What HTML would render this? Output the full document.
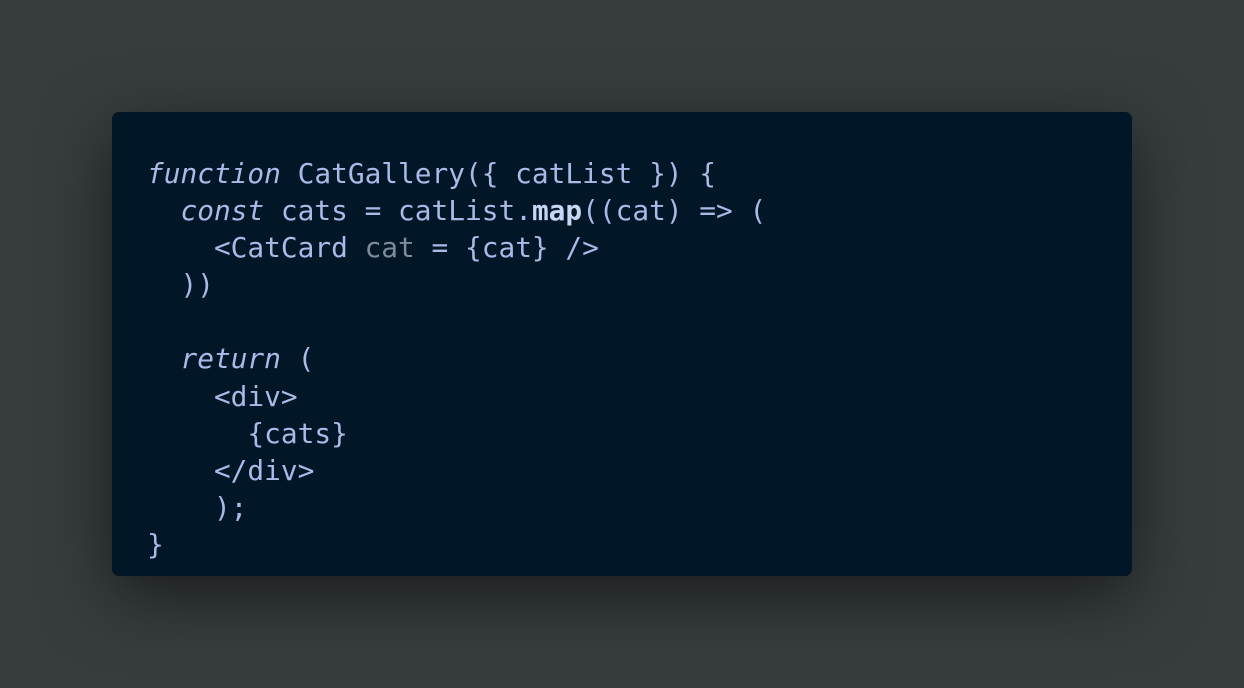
<!DOCTYPE html>
<html><head><meta charset="utf-8"><style>
html,body{margin:0;padding:0;width:1244px;height:688px;overflow:hidden;background:#373d3d;}
.card{position:absolute;left:112px;top:112px;width:1020px;height:464px;background:#011627;border-radius:7px;box-shadow:0 20px 68px rgba(0,0,0,0.55);}
pre{position:absolute;left:147px;top:155px;margin:0;font-family:"DejaVu Sans Mono","Liberation Mono",monospace;font-size:27.8px;line-height:37.1px;color:#a6bbe6;}
i{font-style:italic;color:#a6bbe6}
b{color:#c8d6f5;}
.g{color:#7f8a9a}
</style></head><body>
<div class="card"></div>
<pre><i>function</i> CatGallery({ catList }) {
  <i>const</i> cats = catList.<b>map</b>((cat) =&gt; (
    &lt;CatCard <span class="g">cat</span> = {cat} /&gt;
  ))

  <i>return</i> (
    &lt;div&gt;
      {cats}
    &lt;/div&gt;
    );
}</pre>
</body></html>
